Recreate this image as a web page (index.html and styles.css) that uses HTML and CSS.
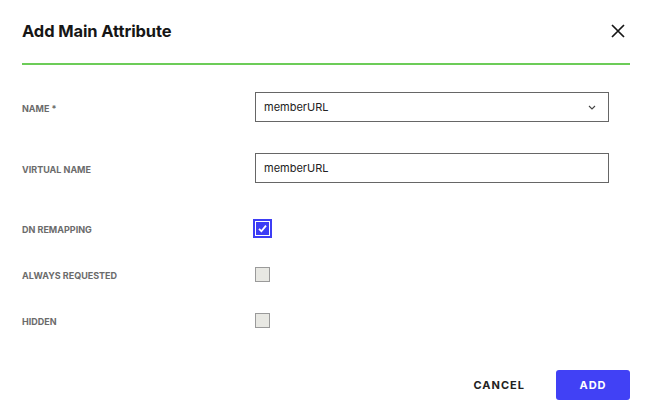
FILE: index.html
```html
<!DOCTYPE html>
<html lang="en">
<head>
<meta charset="utf-8">
<title>Add Main Attribute</title>
<link rel="stylesheet" href="styles.css">
</head>
<body>
<div class="dialog">
  <div class="header">
    <h1 class="title">Add Main Attribute</h1>
    <button class="close" aria-label="Close">
      <svg width="14" height="14" viewBox="0 0 14 14"><path d="M1 1L13 13M13 1L1 13" stroke="#161616" stroke-width="1.7" fill="none"/></svg>
    </button>
  </div>
  <div class="divider"></div>
  <div class="form">
    <div class="row row-field">
      <div class="label">NAME *</div>
      <div class="field select">
        <span>memberURL</span>
        <svg class="chev" width="8" height="5" viewBox="0 0 8 5"><path d="M1 1L4 4L7 1" stroke="#444" stroke-width="1.1" fill="none"/></svg>
      </div>
    </div>
    <div class="row row-field gap-lg">
      <div class="label">VIRTUAL NAME</div>
      <div class="field"><span>memberURL</span></div>
    </div>
    <div class="row row-check gap-lg">
      <div class="label">DN REMAPPING</div>
      <div class="check checked">
        <svg width="11" height="11" viewBox="0 0 11 11"><path d="M2 5.8L4.4 8.2L9 2.6" stroke="#fff" stroke-width="1.8" fill="none"/></svg>
      </div>
    </div>
    <div class="row row-check">
      <div class="label">ALWAYS REQUESTED</div>
      <div class="check"></div>
    </div>
    <div class="row row-check">
      <div class="label">HIDDEN</div>
      <div class="check"></div>
    </div>
  </div>
  <div class="footer">
    <button class="btn btn-text">CANCEL</button>
    <button class="btn btn-primary">ADD</button>
  </div>
</div>
</body>
</html>
```
FILE: styles.css
```css
* { box-sizing: border-box; }
html, body { margin: 0; padding: 0; background: #fff; }
body { font-family: Inter, "Noto Sans", "Liberation Sans", sans-serif; color: #161616; }

.dialog { width: 651px; height: 417px; padding: 0 21px 0 22px; }

.header {
  height: 63px;
  display: flex;
  align-items: center;
  justify-content: space-between;
  padding-bottom: 1px;
}
.divider { height: 2px; background: #3cbc22; transform: scaleY(0.75); }
.title { margin: 0; font-size: 16.5px; font-weight: 700; letter-spacing: -0.1px; color: #161616; }
.close {
  border: 0; background: none; padding: 0; margin-right: 5px;
  width: 14px; height: 14px; display: flex; cursor: pointer;
}

.form { padding-top: 27px; width: 587px; }
.row { display: flex; align-items: center; height: 30px; }
.row-check { margin-top: 16px; }
.gap-lg { margin-top: 31px; }
.row-check.gap-lg { margin-top: 30.5px; }

.label {
  width: 233px;
  padding-top: 2px;
  font-size: 9px;
  font-weight: 700;
  color: #6b6b6b;
  letter-spacing: 0;
}

.field {
  width: 354px;
  height: 30px;
  border: 1px solid #666;
  display: flex;
  align-items: center;
  justify-content: space-between;
  padding: 0 12px 0 8px;
  font-size: 11px;
  color: #222;
}
.chev { margin-top: 1px; }

.check {
  width: 15px; height: 15px;
  background: #e8e8e3;
  border: 1px solid #9a9a9a;
  display: flex; align-items: center; justify-content: center;
}
.check.checked {
  background: #3d3df5;
  border: 1px solid #fff;
  outline: 2px solid #3d3df5;
}

.footer {
  display: flex;
  justify-content: flex-end;
  align-items: center;
  margin-top: 34.5px;
  gap: 15px;
}
.btn {
  height: 30px;
  border: 0;
  font-family: inherit;
  font-size: 11px;
  font-weight: 700;
  letter-spacing: 1px;
  cursor: pointer;
}
.btn-text { background: none; color: #222; padding: 0 16px; }
.btn-primary {
  width: 74px;
  background: #4141f5;
  color: #fff;
  border-radius: 3px;
  padding: 0;
}
```
